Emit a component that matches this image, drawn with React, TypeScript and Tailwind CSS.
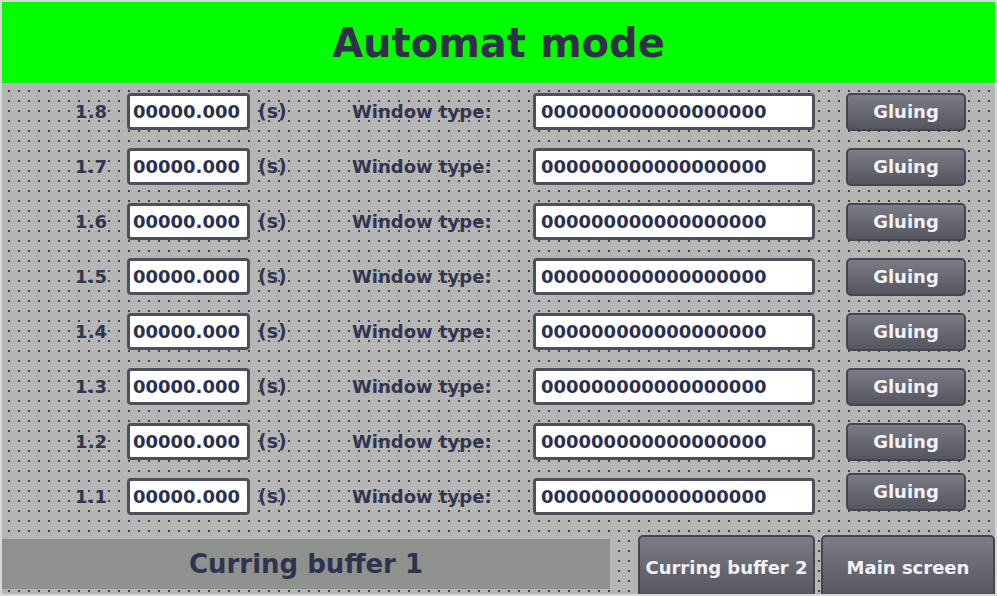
import React from "react";

const rows = ["1.8", "1.7", "1.6", "1.5", "1.4", "1.3", "1.2", "1.1"];

const btn =
  "flex items-center justify-center rounded-[5px] border-2 border-[#43454f] bg-gradient-to-b from-[#7b7c86] to-[#54555f] text-[#f2f2f8] font-bold text-[18px]";

export default function App() {
  return (
    <div
      className="w-[997px] h-[596px] overflow-hidden border-2 border-[#d8d8d8] bg-[#b5b5b5] bg-[radial-gradient(circle,#444_1px,transparent_1.4px)] bg-size-[10px_10px] bg-position-[2px_4px] flex flex-col text-[#33344f]"
      style={{ fontFamily: "'DejaVu Sans', Verdana, sans-serif" }}
    >
      <div className="h-[81px] shrink-0 bg-[#00ff00] flex items-center justify-center">
        <span className="text-[40px] font-bold text-[#30304c] leading-none">Automat mode</span>
      </div>

      <div className="pt-[10px] flex flex-col gap-[18px]">
        {rows.map((r, i) => (
          <div key={r} className="flex items-center h-[37px]">
            <div className="w-[105px] text-right text-[18px] font-bold">{r}</div>
            <div className="ml-[20px] w-[123px] h-[37px] rounded-[4px] border-[3px] border-[#4d505b] bg-white flex items-center pl-[3px] text-[18px] font-bold text-[#2b2f4f]">
              00000.000
            </div>
            <div className="ml-[8px] w-[94px] text-[19px] font-bold">(s)</div>
            <div className="w-[181px] text-[18px] font-bold">Window type:</div>
            <div className="w-[282px] h-[37px] rounded-[4px] border-[3px] border-[#4d505b] bg-white flex items-center pl-[5px] text-[18px] font-bold text-[#2b2f4f]">
              000000000000000000
            </div>
            <div
              className={`ml-[31px] w-[120px] h-[38px] ${btn} ${i === rows.length - 1 ? "mb-[10px]" : ""}`}
            >
              Gluing
            </div>
          </div>
        ))}
      </div>

      <div className="mt-[20px] flex items-start">
        <div className="mt-[4px] w-[608px] h-[50px] bg-[#8f918e] flex items-center justify-center text-[26px] font-bold text-[#30334f]">
          Curring buffer 1
        </div>
        <div className={`ml-[28px] w-[177px] h-[64px] ${btn}`}>Curring buffer 2</div>
        <div className={`ml-[6px] w-[174px] h-[64px] ${btn}`}>Main screen</div>
      </div>
    </div>
  );
}
